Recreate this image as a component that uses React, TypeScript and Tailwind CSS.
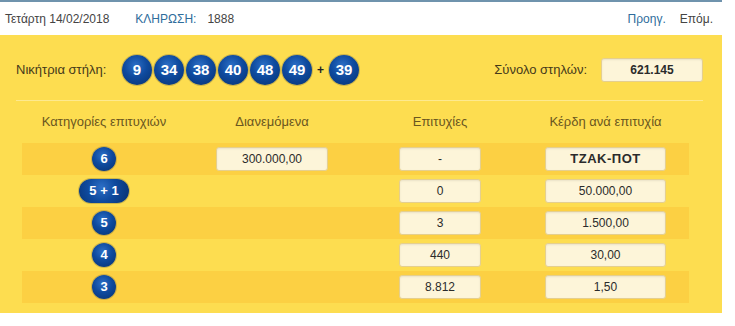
import React from "react";

const ballCls =
  "flex items-center justify-center rounded-full text-white font-bold bg-[radial-gradient(circle_at_45%_35%,#2c6fc6_0%,#0e4a9e_45%,#07306e_100%)] shadow-[0_0_0_1px_rgba(120,110,60,0.35)]";

function Ball({ n }: { n: number }) {
  return (
    <div className={`${ballCls} w-[30px] h-[30px] text-[15px]`}>{n}</div>
  );
}

function Box({ children, w, bold }: { children: React.ReactNode; w: string; bold?: boolean }) {
  return (
    <div
      className={`${w} h-[24px] flex items-center justify-center rounded-[3px] bg-[#fdf5d9] border border-[#e5cf8e] shadow-[inset_0_1px_2px_rgba(0,0,0,0.08)] text-[12px] text-[#2b2b2b] ${bold ? "font-bold" : ""}`}
    >
      {children}
    </div>
  );
}

const rows = [
  { cat: "6", dian: "300.000,00", ep: "-", ker: "ΤΖΑΚ-ΠΟΤ" },
  { cat: "5 + 1", dian: "", ep: "0", ker: "50.000,00" },
  { cat: "5", dian: "", ep: "3", ker: "1.500,00" },
  { cat: "4", dian: "", ep: "440", ker: "30,00" },
  { cat: "3", dian: "", ep: "8.812", ker: "1,50" },
];

export default function App() {
  return (
    <div
      className="w-[735px] h-[326px] bg-white overflow-hidden"
      style={{ fontFamily: '"Liberation Sans", Arial, sans-serif' }}
    >
      <div className="w-[722px]">
        <div className="h-[2px] bg-[#6f93ad]" />
        <div className="h-[33px] flex items-center text-[12px] text-[#444]">
          <span className="ml-[5px]">Τετάρτη 14/02/2018</span>
          <span className="ml-[26px] text-[#2e6d9c]">ΚΛΗΡΩΣΗ:</span>
          <span className="ml-[11px]">1888</span>
          <span className="ml-auto text-[#2e6d9c]">Προηγ.</span>
          <span className="ml-[14px] mr-[9px]">Επόμ.</span>
        </div>
        <div className="h-[278px] bg-[#fddd50] pt-[20px]">
          <div className="h-[30px] flex items-center pl-[16px] pr-[19px]">
            <span className="text-[13px] text-[#45391a] w-[106px]">Νικήτρια στήλη:</span>
            <div className="flex gap-[2px]">
              {[9, 34, 38, 40, 48, 49].map((n) => (
                <Ball key={n} n={n} />
              ))}
            </div>
            <span className="mx-[5px] text-[12px] font-bold text-[#222]">+</span>
            <Ball n={39} />
            <span className="ml-auto text-[13px] text-[#45391a]">Σύνολο στηλών:</span>
            <div className="ml-[14px]">
              <Box w="w-[102px]" bold>
                621.145
              </Box>
            </div>
          </div>
          <div className="mt-[15px] ml-[16px] w-[687px] h-[1px] bg-[#fde98f]" />
          <div className="ml-[22px] w-[667px]">
            <div className="h-[42px] grid grid-cols-[164px_172px_164px_167px] items-center text-[13px] text-[#6a5620]">
              <div className="text-center">Κατηγορίες επιτυχιών</div>
              <div className="text-center">Διανεμόμενα</div>
              <div className="text-center">Επιτυχίες</div>
              <div className="text-center">Κέρδη ανά επιτυχία</div>
            </div>
            {rows.map((r, i) => (
              <div
                key={r.cat}
                className={`h-[32px] grid grid-cols-[164px_172px_164px_167px] items-center ${i % 2 === 0 ? "bg-[#fcd043]" : ""}`}
              >
                <div className="flex justify-center">
                  <div
                    className={`${ballCls} h-[24px] text-[13px] ${r.cat.length > 1 ? "w-[50px]" : "w-[24px]"}`}
                  >
                    {r.cat}
                  </div>
                </div>
                <div className="flex justify-center">
                  {r.dian && <Box w="w-[112px]">{r.dian}</Box>}
                </div>
                <div className="flex justify-center">
                  <Box w="w-[82px]">{r.ep}</Box>
                </div>
                <div className="flex justify-center">
                  <Box w="w-[121px]" bold={r.ker === "ΤΖΑΚ-ΠΟΤ"}>
                    {r.ker === "ΤΖΑΚ-ΠΟΤ" ? <span className="text-[13px] tracking-[0.5px]">{r.ker}</span> : r.ker}
                  </Box>
                </div>
              </div>
            ))}
          </div>
        </div>
      </div>
    </div>
  );
}
